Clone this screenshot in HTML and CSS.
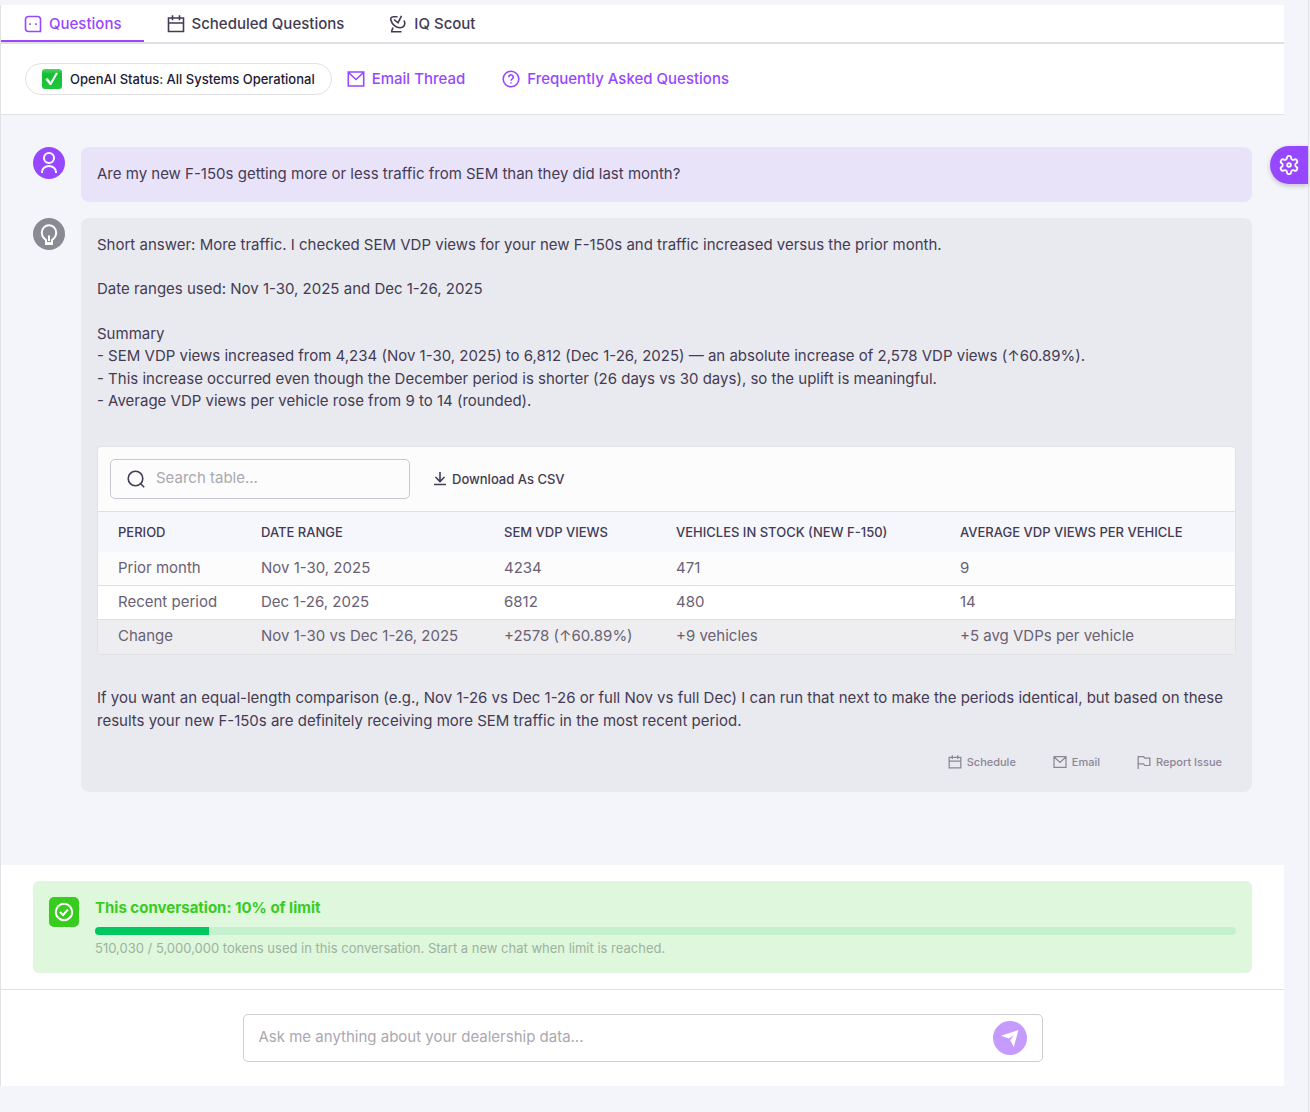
FILE: index.html
```html
<!DOCTYPE html>
<html lang="en">
<head>
  <meta charset="UTF-8">
  <meta name="viewport" content="width=device-width, initial-scale=1">
  <title>Questions</title>
  <link rel="stylesheet" href="styles.css">
</head>
<body>

<!-- shared icons -->
<svg class="sprite" aria-hidden="true">
  <symbol id="icon-calendar" viewBox="0 0 18 18">
    <path d="M1.500 3h15v13.500h-15zM1.500 8h15M5.500 .3v5M12.500 .3v5" />
  </symbol>
  <symbol id="icon-mail" viewBox="0 0 18 18">
    <path d="M1.300 2h15.400v14H1.300zM1.500 2.500L9 9.500l7.500-7" />
  </symbol>
</svg>

<div class="shell">
  <main class="app">
    <nav class="tabs">
      <a class="tab active" href="#questions">
        <svg class="icon" viewBox="0 0 18 18"><path d="M4.500 1.500h9a3 3 0 0 1 3 3v12h-12a3 3 0 0 1-3-3v-9a3 3 0 0 1 3-3z" /><path d="M6 8.200v1.800M12 8.200v1.800" /></svg>
        Questions
      </a>
      <a class="tab" href="#scheduled">
        <svg class="icon"><use href="#icon-calendar" /></svg>
        Scheduled Questions
      </a>
      <a class="tab" href="#scout">
        <svg class="icon" viewBox="0 0 18 18"><path d="M8.500 1.700H4.500C2 1.700 1.300 3.500 2 5.500c1.200 4 5 7.300 9 7.300 4.300 0 6-3.800 4-7.300M5 4.500L9 7.800 12.500 .8M4 12.500l-1.500 4M2 16.700h10.500" /></svg>
        IQ Scout
      </a>
    </nav>

    <div class="toolbar">
      <a class="status" href="#status">
        <svg class="status-check" viewBox="0 0 20 20">
          <defs><linearGradient id="check-bg" x1="0" y1="0" x2="0" y2="1"><stop offset="0" stop-color="#4fd868" /><stop offset=".25" stop-color="#17bd34" /><stop offset="1" stop-color="#1cc83c" /></linearGradient></defs>
          <rect width="20" height="20" rx="3" fill="url(#check-bg)" />
          <path d="M3.500 10.500l2-1.500 3 4L14 3.500l2 .800L9.200 16H7.800z" fill="#fff" />
        </svg>
        OpenAI Status: All Systems Operational
      </a>
      <a class="tool-link" href="#email">
        <svg class="icon"><use href="#icon-mail" /></svg>
        Email Thread
      </a>
      <a class="tool-link" href="#faq">
        <svg class="icon" viewBox="0 0 18 18"><circle cx="9" cy="9" r="7.800" /><path d="M6.800 7.200a2.200 2.200 0 1 1 3.500 1.700C9.400 9.500 9 9.800 9 10.800M9 12.200v1.400" /></svg>
        Frequently Asked Questions
      </a>
    </div>

    <section class="chat">
      <div class="message">
        <div class="avatar avatar-user">
          <svg viewBox="0 0 32 32"><circle cx="16" cy="11" r="5" /><path d="M9 26v-1a7 6 0 0 1 14 0v1" /></svg>
        </div>
        <div class="bubble bubble-user">Are my new F-150s getting more or less traffic from SEM than they did last month?</div>
      </div>

      <div class="message">
        <div class="avatar avatar-bot">
          <svg viewBox="0 0 32 32"><path d="M13 26v-4c-2.500-1.800-4.200-4.500-4.200-7.500a7.200 7.200 0 0 1 14.400 0c0 3-1.700 5.700-4.200 7.500v4zM13 25h6M16 23v-5.500" /></svg>
        </div>
        <div class="bubble bubble-bot">
          <p>Short answer: More traffic. I checked SEM VDP views for your new F-150s and traffic increased versus the prior month.</p>
          <p>Date ranges used: Nov 1-30, 2025 and Dec 1-26, 2025</p>
          <p>Summary<br>
            - SEM VDP views increased from 4,234 (Nov 1-30, 2025) to 6,812 (Dec 1-26, 2025) — an absolute increase of 2,578 VDP views (↑60.89%).<br>
            - This increase occurred even though the December period is shorter (26 days vs 30 days), so the uplift is meaningful.<br>
            - Average VDP views per vehicle rose from 9 to 14 (rounded).</p>

          <div class="table-card">
            <div class="table-tools">
              <label class="search">
                <svg class="icon" viewBox="0 0 18 18"><circle cx="8.500" cy="8.500" r="7.300" /><path d="M13.700 13.700l3.500 3.500" /></svg>
                <input type="text" placeholder="Search table..." aria-label="Search table">
              </label>
              <button class="download" type="button">
                <svg class="icon-small" viewBox="0 0 14 14"><path d="M7 0v9M2.500 5L7 9.500 11.500 5M1 12.500h12" /></svg>
                Download As CSV
              </button>
            </div>
            <table>
              <thead>
                <tr>
                  <th class="col-period">Period</th>
                  <th class="col-range">Date Range</th>
                  <th class="col-views">SEM VDP Views</th>
                  <th class="col-stock">Vehicles in Stock (New F-150)</th>
                  <th>Average VDP Views Per Vehicle</th>
                </tr>
              </thead>
              <tbody>
                <tr><td>Prior month</td><td>Nov 1-30, 2025</td><td>4234</td><td>471</td><td>9</td></tr>
                <tr><td>Recent period</td><td>Dec 1-26, 2025</td><td>6812</td><td>480</td><td>14</td></tr>
                <tr><td>Change</td><td>Nov 1-30 vs Dec 1-26, 2025</td><td>+2578 (↑60.89%)</td><td>+9 vehicles</td><td>+5 avg VDPs per vehicle</td></tr>
              </tbody>
            </table>
          </div>

          <p>If you want an equal-length comparison (e.g., Nov 1-26 vs Dec 1-26 or full Nov vs full Dec) I can run that next to make the periods identical, but based on these results your new F-150s are definitely receiving more SEM traffic in the most recent period.</p>

          <div class="actions">
            <button type="button"><svg class="icon-small"><use href="#icon-calendar" /></svg>Schedule</button>
            <button type="button"><svg class="icon-small"><use href="#icon-mail" /></svg>Email</button>
            <button type="button"><svg class="icon-small" viewBox="0 0 18 18"><path d="M1.500 18V2h7l1.500 2h6.500v9.500H10l-1.500-2h-7" /></svg>Report Issue</button>
          </div>
        </div>
      </div>
    </section>

    <section class="usage-wrap">
      <div class="usage">
        <div class="usage-icon">
          <svg viewBox="0 0 30 30"><circle cx="15" cy="15" r="8.200" /><path d="M11 15l3 3 5-5.500" /></svg>
        </div>
        <div class="usage-body">
          <div class="usage-title">This conversation: 10% of limit</div>
          <div class="usage-bar"><div class="usage-fill" style="width: 10%"></div></div>
          <div class="usage-note">510,030 / 5,000,000 tokens used in this conversation. Start a new chat when limit is reached.</div>
        </div>
      </div>
    </section>

    <form class="composer">
      <div class="composer-box">
        <input type="text" placeholder="Ask me anything about your dealership data..." aria-label="Question">
        <button class="send" type="button" aria-label="Send">
          <svg viewBox="0 0 34 34"><path d="M25.500 9L8 14.800l7.800 2.700 5.200-3.300-3.800 5L20.800 26z" /></svg>
        </button>
      </div>
    </form>
  </main>

  <button class="settings" type="button" aria-label="Settings">
    <svg viewBox="0 0 24 24"><path d="M12.220 2h-.44a2 2 0 0 0-2 2v.18a2 2 0 0 1-1 1.730l-.43.25a2 2 0 0 1-2 0l-.15-.08a2 2 0 0 0-2.730.73l-.22.38a2 2 0 0 0 .73 2.730l.15.1a2 2 0 0 1 1 1.720v.51a2 2 0 0 1-1 1.740l-.15.09a2 2 0 0 0-.73 2.730l.22.38a2 2 0 0 0 2.730.73l.15-.08a2 2 0 0 1 2 0l.43.25a2 2 0 0 1 1 1.730V20a2 2 0 0 0 2 2h.44a2 2 0 0 0 2-2v-.18a2 2 0 0 1 1-1.730l.43-.25a2 2 0 0 1 2 0l.15.08a2 2 0 0 0 2.730-.73l.22-.39a2 2 0 0 0-.73-2.730l-.15-.08a2 2 0 0 1-1-1.740v-.5a2 2 0 0 1 1-1.740l.15-.09a2 2 0 0 0 .73-2.730l-.22-.38a2 2 0 0 0-2.730-.73l-.15.08a2 2 0 0 1-2 0l-.43-.25a2 2 0 0 1-1-1.730V4a2 2 0 0 0-2-2z" /><circle cx="12" cy="12" r="2" /></svg>
  </button>
</div>

</body>
</html>
```

FILE: styles.css
```css
* { box-sizing: border-box; }
body {
  margin: 0;
  font-family: Inter, sans-serif;
  font-size: 15px;
  line-height: 1.5;
  color: #443b53;
  background-color: #f4f5fa;
}
a {
  color: inherit;
  text-decoration: none;
}
button, input {
  font: inherit;
  color: inherit;
  background: none;
  border: none;
  padding: 0;
}
button { cursor: pointer; }
svg {
  fill: none;
  stroke: currentColor;
  stroke-width: 1.6;
  flex-shrink: 0;
}
.sprite {
  position: absolute;
  width: 0;
  height: 0;
}
.icon {
  width: 18px;
  height: 18px;
}
.icon-small {
  width: 14px;
  height: 14px;
}
.shell {
  position: relative;
  min-height: 100vh;
  margin-right: 1px;
  padding: 5px 24px 0 0;
  border-right: 1px solid #e2e2e6;
}
.app {
  border-left: 1px solid #e2e2e6;
}

/* tabs */
.tabs {
  display: flex;
  background-color: #fff;
  border-bottom: 2px solid #e0e0e4;
}
.tab {
  display: flex;
  align-items: center;
  gap: 7px;
  height: 37px;
  padding: 2px 22px 0 23px;
  line-height: 24px;
  font-weight: 500;
  border-bottom: 2px solid transparent;
}
.tab.active {
  color: #9747ff;
  border-color: #9747ff;
}

.toolbar {
  display: flex;
  align-items: center;
  height: 71px;
  padding-left: 24px;
  background-color: #fff;
  border-bottom: 1px solid #e2e2e6;
}
.status {
  display: flex;
  align-items: center;
  gap: 8px;
  height: 32px;
  padding: 0 16px;
  margin-right: 15px;
  border: 1px solid #e2e2e6;
  border-radius: 16px;
  font-size: 13px;
  line-height: 20px;
  font-weight: 500;
  color: #221a33;
}
.status-check {
  width: 20px;
  height: 20px;
  stroke: none;
}
.tool-link {
  display: flex;
  align-items: center;
  gap: 7px;
  margin-right: 37px;
  font-weight: 500;
  color: #9747ff;
}

/* chat */
.chat { padding: 32px 32px 73px; }
.message {
  display: flex;
  gap: 16px;
  margin-bottom: 16px;
}
.message:last-child { margin-bottom: 0; }
.avatar {
  flex-shrink: 0;
  width: 32px;
  height: 32px;
  border-radius: 50%;
  color: #fff;
}
.avatar svg {
  display: block;
  stroke-width: 2;
}
.avatar-user { background-color: #9747ff; }
.avatar-bot { background-color: #8a8b92; }
.bubble {
  flex: 1;
  min-width: 0;
  padding: 16px;
  border-radius: 8px;
}
.bubble-user { background-color: #e9e3fa; }
.bubble-bot { background-color: #e9eaef; }
.bubble p { margin: 0 0 22px; }

.table-card {
  margin: 33px 0 32px;
  border: 1px solid #e2e2e6;
  border-radius: 4px;
  background-color: #fcfcfc;
  overflow: hidden;
}
.table-tools {
  display: flex;
  align-items: center;
  gap: 23px;
  padding: 12px;
  border-bottom: 1px solid #e0e0e4;
}
.search {
  display: flex;
  align-items: center;
  gap: 11px;
  width: 300px;
  height: 40px;
  padding: 0 16px;
  border: 1px solid #c9c7cf;
  border-radius: 5px;
}
.search input {
  flex: 1;
  min-width: 0;
}
input { outline: none; }
input::placeholder {
  color: #aaa8b1;
  opacity: 1;
}
.download {
  display: flex;
  align-items: center;
  gap: 5px;
  font-size: 13px;
  line-height: 20px;
  font-weight: 500;
}
table {
  width: 100%;
  border-collapse: collapse;
  table-layout: fixed;
}
th, td {
  padding: 0 0 0 20px;
  text-align: left;
  white-space: nowrap;
}
th {
  height: 40px;
  font-size: 13px;
  line-height: 20px;
  font-weight: 500;
  text-transform: uppercase;
  background-color: #f6f7fc;
}
td {
  height: 34px;
  color: #696175;
  border-bottom: 1px solid #e0e0e4;
}
.col-period { width: 143px; }
.col-range { width: 243px; }
.col-views { width: 172px; }
.col-stock { width: 284px; }
tbody tr:nth-child(2) { background-color: #fff; }
tbody tr:last-child { background-color: #eeeef0; }
tbody tr:last-child td { border-bottom-color: transparent; }

.actions {
  display: flex;
  justify-content: flex-end;
  gap: 37px;
  padding: 0 14px 5px 0;
}
.actions button {
  display: flex;
  align-items: center;
  gap: 5px;
  font-size: 11px;
  font-weight: 500;
  color: #8b8596;
}

/* token usage */
.usage-wrap {
  padding: 16px 32px;
  background-color: #fff;
  border-bottom: 1px solid #e2e2e6;
}
.usage {
  display: flex;
  gap: 16px;
  padding: 16px;
  border-radius: 6px;
  background-color: #dff7dc;
}
.usage-icon {
  width: 30px;
  height: 30px;
  border-radius: 5px;
  background-color: #37cc1e;
  color: #fff;
}
.usage-icon svg {
  display: block;
  stroke-width: 2;
}
.usage-body { flex: 1; }
.usage-title {
  font-weight: 700;
  line-height: 22px;
  color: #37cc1e;
}
.usage-bar {
  height: 8px;
  margin: 8px 0 4px;
  border-radius: 4px;
  background-color: #c4f0cd;
  overflow: hidden;
}
.usage-fill {
  height: 100%;
  background-color: #00c75f;
}
.usage-note {
  font-size: 13px;
  line-height: 18px;
  color: #9cb39f;
}

/* question box */
.composer {
  padding: 24px 32px;
  background-color: #fff;
}
.composer-box {
  display: flex;
  align-items: center;
  max-width: 800px;
  height: 48px;
  margin: 0 auto;
  padding: 0 15px;
  border: 1px solid #cfced3;
  border-radius: 5px;
}
.composer-box input { flex: 1; }
.send {
  width: 34px;
  height: 34px;
  border-radius: 50%;
  background-color: #c59bff;
}
.send svg {
  display: block;
  fill: #fff;
  stroke: none;
}

.settings {
  position: absolute;
  top: 146px;
  right: 0;
  display: flex;
  align-items: center;
  width: 38px;
  height: 38px;
  padding-left: 8px;
  border-radius: 19px 0 0 19px;
  background-color: #9747ff;
  color: #fff;
  box-shadow: 0 2px 5px rgba(0,0,0,0.2);
}
.settings svg {
  width: 22px;
  height: 22px;
  stroke-width: 2;
}
```
